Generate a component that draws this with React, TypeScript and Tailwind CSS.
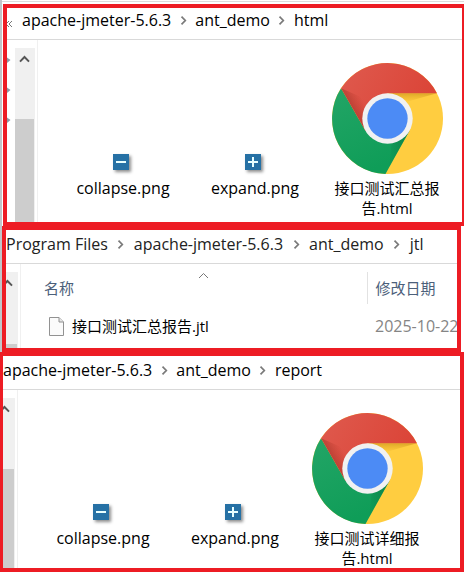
import React from 'react';

const Separator = ({ className }: { className: string }) => (
  <span className={`flex shrink-0 justify-center pt-px ${className}`} aria-hidden="true">
    <svg width="7" height="9" viewBox="0 0 7 9" fill="none" stroke="#7a7a7a" strokeWidth="1.7">
      <path d="M1.5 .7L5.3 4.5L1.5 8.3" />
    </svg>
  </span>
);

type BreadcrumbProps = { parts: string[]; className: string; separatorClass?: string };

const Breadcrumb = ({ parts, className, separatorClass = 'w-6' }: BreadcrumbProps) => (
  <nav className={`flex items-center overflow-hidden whitespace-nowrap border-b border-[#d9d9d9] text-base leading-6 ${className}`}>
    {parts.map((part, index) => (
      <React.Fragment key={part}>
        {index > 0 && <Separator className={separatorClass} />}
        <a href="#">{part}</a>
      </React.Fragment>
    ))}
  </nav>
);

const ScrollBar = ({ className, trackClass }: { className: string; trackClass: string }) => (
  <div className={`mt-2 flex shrink-0 justify-end overflow-hidden ${className}`}>
    <div className="flex w-5 shrink-0 flex-col bg-[#f0f0f0]">
      <button type="button" aria-label="Scroll up" className={`flex w-full justify-center pt-[7px] pr-px ${trackClass}`}>
        <svg width="11" height="8" viewBox="0 0 11 8" fill="none" stroke="#555" strokeWidth="2">
          <path d="M1 6.6L5.5 2L10 6.6" />
        </svg>
      </button>
      <div className="mr-px flex-1 bg-[#cdcdcd]"></div>
    </div>
  </div>
);

const Pin = () => (
  <svg width="4" height="7" viewBox="0 0 4 7" fill="#8f99a6">
    <path d="M0 .5L3.5 3L0 6Z" />
  </svg>
);

const ToggleIcon = ({ plus = false }: { plus?: boolean }) => (
  <svg
    className="mr-1 mb-1 shadow-[2px_2px_3px_rgba(0,0,0,0.45)]"
    width="16"
    height="16"
    viewBox="0 0 16 16"
  >
    <rect width="16" height="16" fill="#2671a5" />
    <path d="M3 8H13" stroke="#e9ffff" strokeWidth="2" />
    {plus && <path d="M8 3V13" stroke="#e9ffff" strokeWidth="2" />}
  </svg>
);

const ChromeIcon = () => (
  <svg width="111" height="111" viewBox="0 0 110 110">
    <defs>
      <linearGradient id="red" x1="0" y1="0" x2="1" y2="0.4">
        <stop offset="0" stopColor="#df5a4e" />
        <stop offset="1" stopColor="#db4437" />
      </linearGradient>
      <linearGradient id="redShade" gradientUnits="userSpaceOnUse" x1="21" y1="46" x2="32" y2="40">
        <stop offset="0" stopColor="#8c2a20" stopOpacity="0.4" />
        <stop offset="1" stopColor="#a52714" stopOpacity="0" />
      </linearGradient>
      <linearGradient id="green" x1="0" y1="0" x2="0.4" y2="1">
        <stop offset="0" stopColor="#23a566" />
        <stop offset="1" stopColor="#0f9d58" />
      </linearGradient>
      <linearGradient id="greenShade" gradientUnits="userSpaceOnUse" x1="70" y1="80" x2="58" y2="82">
        <stop offset="0" stopColor="#0b7a43" stopOpacity="0.55" />
        <stop offset="1" stopColor="#0b7a43" stopOpacity="0.15" />
      </linearGradient>
      <linearGradient id="yellowShade" gradientUnits="userSpaceOnUse" x1="0" y1="30" x2="0" y2="39">
        <stop offset="0" stopColor="#b98210" stopOpacity="0.5" />
        <stop offset="1" stopColor="#e9a820" stopOpacity="0.1" />
      </linearGradient>
    </defs>
    <circle cx="55" cy="55" r="55" fill="#ffcd40" />
    <path d="M55 30H104L76 38Z" fill="url(#yellowShade)" />
    <path d="M9 25A55 55 0 0 0 53 110L76.7 67.5L55 55L33.3 67.5Z" fill="url(#green)" />
    <path d="M59 79L76.7 67.5L57 102Z" fill="url(#greenShade)" />
    <path d="M9 25A55 55 0 0 1 104 30H55V55L33.3 67.5Z" fill="url(#red)" />
    <path d="M9 25L33.3 67.5L50 50L36 37Z" fill="url(#redShade)" />
    <circle cx="55" cy="55" r="25" fill="#f1f1f1" />
    <circle cx="55" cy="55" r="20" fill="#4c8bf5" />
  </svg>
);

const FileItem = ({ icon, children }: { icon: React.ReactNode; children: React.ReactNode }) => (
  <figure className="flex w-33 shrink-0 flex-col items-center">
    <div className="flex h-[111px] items-end">{icon}</div>
    <figcaption className="mt-1 h-10 text-center text-base leading-5">{children}</figcaption>
  </figure>
);

const FileGrid = ({ report, className = '' }: { report: string[]; className?: string }) => (
  <div className={`ml-[2px] flex flex-1 overflow-hidden border-l border-[#f0f0f0] pt-[23px] pl-[19px] ${className}`}>
    <FileItem icon={<ToggleIcon />}>collapse.png</FileItem>
    <FileItem icon={<ToggleIcon plus />}>expand.png</FileItem>
    <FileItem icon={<ChromeIcon />}>
      <span className="text-[15px]">
        {report.map((line) => (
          <span key={line} className="block">
            {line}
          </span>
        ))}
      </span>
    </FileItem>
  </div>
);

const DocumentIcon = () => (
  <svg width="15" height="19" viewBox="0 0 15 19" fill="#fbfbfb" stroke="#929292">
    <path d="M.5 .5H10L14.5 5V18.5H.5Z" />
    <path d="M10 .5V5H14.5" fill="#e6e6e6" />
  </svg>
);

const App = () => {
  return (
    <main className="border-l-2 border-[#c3c5c9] bg-white font-['Open_Sans','Noto_Sans_CJK_SC',sans-serif] text-black">
      <div className="h-1 border-b border-white pt-px">
        <div className="h-px bg-[#dcdcdc]"></div>
      </div>

      {/* html folder */}
      <section className="ml-px border-4 border-r-2 border-[#ed1c24]">
        <div className="flex border-b border-[#d9d9d9]">
          <span className="flex w-[15px] shrink-0 items-center text-[#777]" aria-hidden="true">
            <svg width="6" height="8" viewBox="0 0 6 8" fill="none" stroke="currentColor">
              <path d="M2 1L-1 4L2 7M5 1L2 4L5 7" />
            </svg>
          </span>
          <Breadcrumb parts={['apache-jmeter-5.6.3', 'ant_demo', 'html']} className="border-b-0 pb-[7px]" />
        </div>
        <div className="flex">
          <div className="flex w-2 shrink-0 flex-col gap-[23px] pt-[17px]">
            <Pin />
            <Pin />
            <Pin />
          </div>
          <ScrollBar className="w-5" trackClass="h-[71px]" />
          <FileGrid report={['接口测试汇总报', '告.html']} className="pb-1" />
        </div>
      </section>

      {/* jtl folder */}
      <section className="mr-[3px] border-4 border-[#ed1c24]">
        <Breadcrumb
          parts={['Program Files', 'apache-jmeter-5.6.3', 'ant_demo', 'jtl']}
          className="pt-[2px] pb-[7px] text-[#222]"
          separatorClass="w-[26px]"
        />
        <div className="flex">
          <ScrollBar className="w-3" trackClass="h-[72px]" />
          <div className="ml-[2px] min-w-0 flex-1 overflow-hidden border-l border-[#f0f0f0] pt-2">
            <table className="w-full table-fixed text-left text-[15px] leading-5 whitespace-nowrap">
              <thead>
                <tr className="h-8 text-[#4c607a]">
                  <th className="relative pl-[23px] font-normal">
                    名称
                    <svg className="absolute top-0 left-1/2 ml-1" width="11" height="7" viewBox="0 0 11 7" fill="none" stroke="#777">
                      <path d="M1 6L5.5 1.5L10 6" />
                    </svg>
                  </th>
                  <th className="w-[90px] border-l border-[#e2e2e2] pl-2 font-normal">修改日期</th>
                </tr>
              </thead>
              <tbody>
                <tr className="h-11">
                  <td className="pl-7">
                    <span className="flex items-center gap-2">
                      <DocumentIcon />
                      接口测试汇总报告.jtl
                    </span>
                  </td>
                  <td className="overflow-hidden pl-2 text-base text-clip text-[#858585]">2025-10-22</td>
                </tr>
              </tbody>
            </table>
          </div>
        </div>
      </section>

      {/* report folder */}
      <section className="-ml-[2px] border-4 border-l-3 border-[#ed1c24]">
        <Breadcrumb parts={['apache-jmeter-5.6.3', 'ant_demo', 'report']} className="pt-[2px] pb-[7px]" />
        <div className="flex">
          <ScrollBar className="w-3" trackClass="h-[71px]" />
          <FileGrid report={['接口测试详细报', '告.html']} />
        </div>
      </section>
    </main>
  );
};

export default App;
